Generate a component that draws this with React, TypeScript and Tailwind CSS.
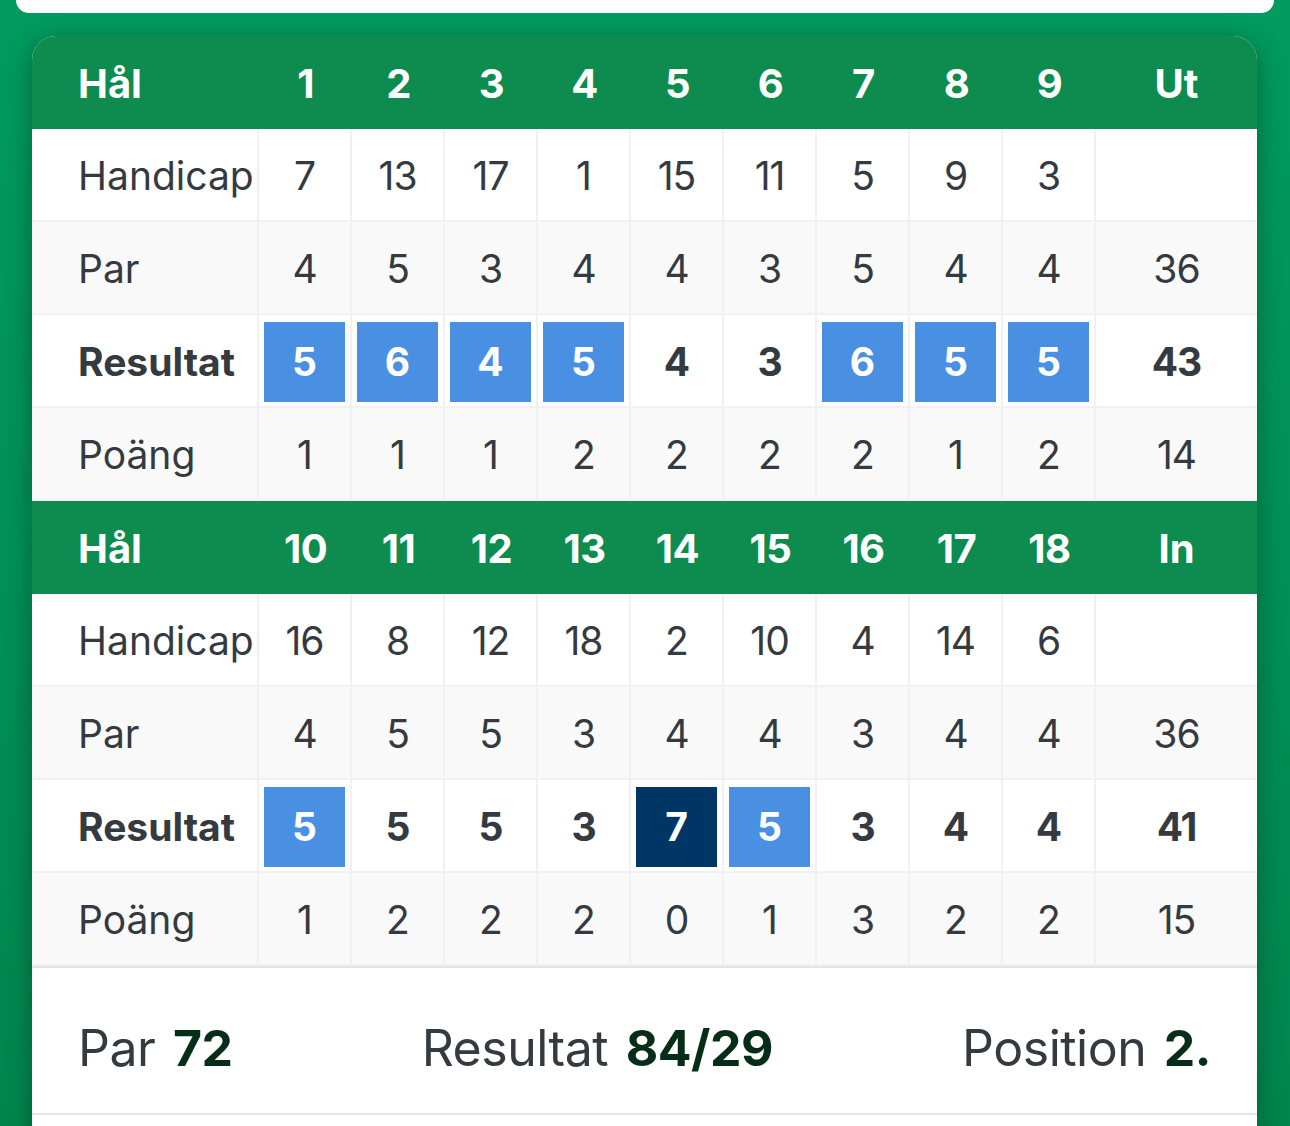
import React from "react";

type Mark = "none" | "blue" | "navy";

const front = {
  holes: ["1", "2", "3", "4", "5", "6", "7", "8", "9"],
  total: "Ut",
  hcp: ["7", "13", "17", "1", "15", "11", "5", "9", "3"],
  par: ["4", "5", "3", "4", "4", "3", "5", "4", "4"],
  parTot: "36",
  res: ["5", "6", "4", "5", "4", "3", "6", "5", "5"],
  marks: ["blue", "blue", "blue", "blue", "none", "none", "blue", "blue", "blue"] as Mark[],
  resTot: "43",
  pts: ["1", "1", "1", "2", "2", "2", "2", "1", "2"],
  ptsTot: "14",
};

const back = {
  holes: ["10", "11", "12", "13", "14", "15", "16", "17", "18"],
  total: "In",
  hcp: ["16", "8", "12", "18", "2", "10", "4", "14", "6"],
  par: ["4", "5", "5", "3", "4", "4", "3", "4", "4"],
  parTot: "36",
  res: ["5", "5", "5", "3", "7", "5", "3", "4", "4"],
  marks: ["blue", "none", "none", "none", "navy", "blue", "none", "none", "none"] as Mark[],
  resTot: "41",
  pts: ["1", "2", "2", "2", "0", "1", "3", "2", "2"],
  ptsTot: "15",
};

const grid = "grid grid-cols-[227px_repeat(9,93px)_1fr]";

function HeaderRow({ holes, total }: { holes: string[]; total: string }) {
  return (
    <div className={`${grid} h-[93px] bg-[#0e8c4f] text-white font-bold text-[40px] items-center`}>
      <div className="pl-[46px] pt-[2px]">Hål</div>
      {holes.map((h, i) => (
        <div key={i} className="text-center pt-[2px] tracking-[-0.5px]">
          {h}
        </div>
      ))}
      <div className="text-center pt-[2px]">{total}</div>
    </div>
  );
}

function DataRow({
  label,
  values,
  total,
  bg,
  bold,
  marks,
}: {
  label: string;
  values: string[];
  total: string;
  bg: string;
  bold?: boolean;
  marks?: Mark[];
}) {
  return (
    <div className={`${grid} h-[93px] ${bg} border-b-2 border-[#f1f1f3] text-[#343a40] text-[39px] ${bold ? "font-bold" : "font-normal"}`}>
      <div className="pl-[46px] pt-[4px] flex items-center border-r-2 border-[#f1f1f3]">{label}</div>
      {values.map((v, i) => {
        const m = marks ? marks[i] : "none";
        return (
          <div key={i} className="border-r-2 border-[#f1f1f3] flex items-center justify-center">
            {m === "none" ? (
              <span className="tracking-[-1px] pt-[4px]">{v}</span>
            ) : (
              <div
                className={`w-[81px] h-[80px] mt-[2px] flex items-center justify-center text-white ${
                  m === "blue" ? "bg-[#4a90e2]" : "bg-[#003666]"
                }`}
              >
                <span className="pt-[2px]">{v}</span>
              </div>
            )}
          </div>
        );
      })}
      <div className="flex items-center justify-center tracking-[-1px] pt-[4px]">{total}</div>
    </div>
  );
}

function Half({ d }: { d: typeof front }) {
  return (
    <>
      <HeaderRow holes={d.holes} total={d.total} />
      <DataRow label="Handicap" values={d.hcp} total="" bg="bg-white" />
      <DataRow label="Par" values={d.par} total={d.parTot} bg="bg-[#f9f9f9]" />
      <DataRow label="Resultat" values={d.res} total={d.resTot} bg="bg-white" bold marks={d.marks} />
      <DataRow label="Poäng" values={d.pts} total={d.ptsTot} bg="bg-[#f9f9f9]" />
    </>
  );
}

export default function App() {
  return (
    <div
      className="w-[1290px] h-[1126px] overflow-hidden bg-gradient-to-b from-[#019b5f] to-[#01854f]"
      style={{ fontFamily: "Inter, 'Noto Sans', sans-serif" }}
    >
      <div className="mx-4 h-[13px] bg-white rounded-b-[24px]" />
      <div className="ml-8 mr-[33px] mt-[23px] rounded-t-[24px] overflow-hidden bg-white shadow-[0_6px_24px_rgba(0,40,20,0.45)]">
        <Half d={front} />
        <Half d={back} />
        <div className="border-t-2 border-[#e4e4e6] h-[147px] pt-[16px] px-[46px] flex items-center justify-between text-[#343a40] text-[50px] tracking-[-0.5px]">
          <div>
            Par <span className="font-bold text-[#062d17] ml-1">72</span>
          </div>
          <div>
            Resultat <span className="font-bold text-[#062d17] ml-1">84/29</span>
          </div>
          <div>
            Position <span className="font-bold text-[#062d17] ml-1">2.</span>
          </div>
        </div>
        <div className="border-t-2 border-[#e4e4e6] h-[40px]" />
      </div>
    </div>
  );
}
